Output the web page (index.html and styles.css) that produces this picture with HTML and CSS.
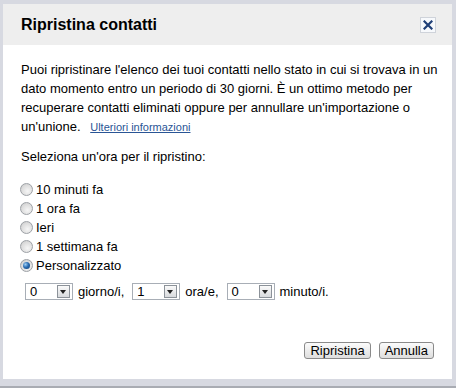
FILE: index.html
```html
<!DOCTYPE html>
<html>
<head>
    <title>Ripristina contatti</title>
    <link rel="stylesheet" href="styles.css">
</head>
<body>
    <div class="dialog">
        <div class="dialog-head">
            <h1>Ripristina contatti</h1>
            <span class="close">
                <svg width="10" height="10" viewBox="0 0 10 10"><path d="M1.5 1.5 L8.5 8.5 M8.5 1.5 L1.5 8.5" stroke="#1f3f77" stroke-width="2.2" stroke-linecap="square"/></svg>
            </span>
        </div>

        <div class="dialog-body">
            <p class="intro">Puoi ripristinare l'elenco dei tuoi contatti nello stato in cui si trovava in un dato momento entro un periodo di 30 giorni. È un ottimo metodo per recuperare contatti eliminati oppure per annullare un'importazione o un'unione. <a href="#" class="more">Ulteriori informazioni</a></p>

            <p class="label">Seleziona un'ora per il ripristino:</p>

            <ul class="options">
                <li><span class="radio"></span>10 minuti fa</li>
                <li><span class="radio"></span>1 ora fa</li>
                <li><span class="radio"></span>Ieri</li>
                <li><span class="radio"></span>1 settimana fa</li>
                <li><span class="radio checked"></span>Personalizzato</li>
            </ul>

            <div class="custom">
                <span class="select"><span class="value">0</span><span class="arrow"></span></span>
                <span class="unit">giorno/i,</span>
                <span class="select"><span class="value">1</span><span class="arrow"></span></span>
                <span class="unit">ora/e,</span>
                <span class="select"><span class="value">0</span><span class="arrow"></span></span>
                <span class="unit">minuto/i.</span>
            </div>
        </div>

        <div class="dialog-foot">
            <button class="btn">Ripristina</button>
            <button class="btn">Annulla</button>
        </div>
    </div>
</body>
</html>
```

FILE: styles.css
```css
body {
    margin: 0;
    padding: 4px 4px 7px 3px;
    background-color: #d7d9e1;
    font-family: "Liberation Sans", Arial, sans-serif;
    font-size: 13px;
    color: #000;
    border-bottom: 2px solid #a9acb3;
}

.dialog {
    width: 449px;
    height: 375px;
    background-color: #fff;
    display: flex;
    flex-direction: column;
}

.dialog-head {
    height: 41px;
    background-color: #eeeeee;
    display: flex;
    align-items: center;
    justify-content: space-between;
    padding: 0 16px 0 18px;
}
.dialog-head h1 {
    margin: 0;
    font-size: 16px;
    font-weight: bold;
}
.close {
    width: 14px;
    height: 14px;
    border: 1px solid #cfd3da;
    background-color: #f7f9fc;
    display: flex;
    align-items: center;
    justify-content: center;
}

.dialog-body {
    flex: 1;
    padding: 15px 11px 0 18px;
}
.intro {
    margin: 0;
    line-height: 19px;
}
.more {
    margin-left: 6px;
    font-size: 11px;
    color: #2a5595;
}
.label {
    margin: 10px 0 0;
    line-height: 19px;
}

.options {
    list-style: none;
    margin: 14px 0 0;
    padding: 0;
}
.options li {
    display: flex;
    align-items: center;
    height: 19px;
}
.radio {
    width: 11px;
    height: 11px;
    border: 1px solid #9da1a6;
    border-radius: 50%;
    background: radial-gradient(circle at 60% 65%, #f6f6f6 0%, #dcdcdc 60%, #c4c4c4 100%);
    margin: 0 3px 0 -1px;
    position: relative;
}
.radio.checked::after {
    content: "";
    position: absolute;
    left: 2px;
    top: 2px;
    width: 7px;
    height: 7px;
    border-radius: 50%;
    background: radial-gradient(circle at 35% 35%, #9fd0f5 0%, #2b6db3 45%, #0d3a6e 100%);
}

.custom {
    display: flex;
    align-items: center;
    margin: 8px 0 0 4px;
}
.select {
    width: 40px;
    height: 15px;
    border: 1px solid #a8aeb6;
    display: flex;
    align-items: center;
    justify-content: space-between;
    padding: 0 2px 0 4px;
    margin-right: 5px;
}
.select .value {
    line-height: 15px;
}
.arrow {
    width: 11px;
    height: 11px;
    border: 1px solid #8c9299;
    background: linear-gradient(#fafafa, #d8dadd);
    position: relative;
}
.arrow::after {
    content: "";
    position: absolute;
    left: 2px;
    top: 4px;
    border-left: 3.5px solid transparent;
    border-right: 3.5px solid transparent;
    border-top: 4px solid #222;
}
.unit {
    margin-right: 8px;
}

.dialog-foot {
    display: flex;
    justify-content: flex-end;
    gap: 8px;
    padding: 0 18px 20px 0;
}
.btn {
    font-family: "Liberation Sans", Arial, sans-serif;
    font-size: 13px;
    height: 17px;
    padding: 0 5px;
    border: 1px solid #8a8a8a;
    border-radius: 3px;
    background: linear-gradient(#fbfbfb, #dedede);
    color: #000;
    line-height: 15px;
}
```
